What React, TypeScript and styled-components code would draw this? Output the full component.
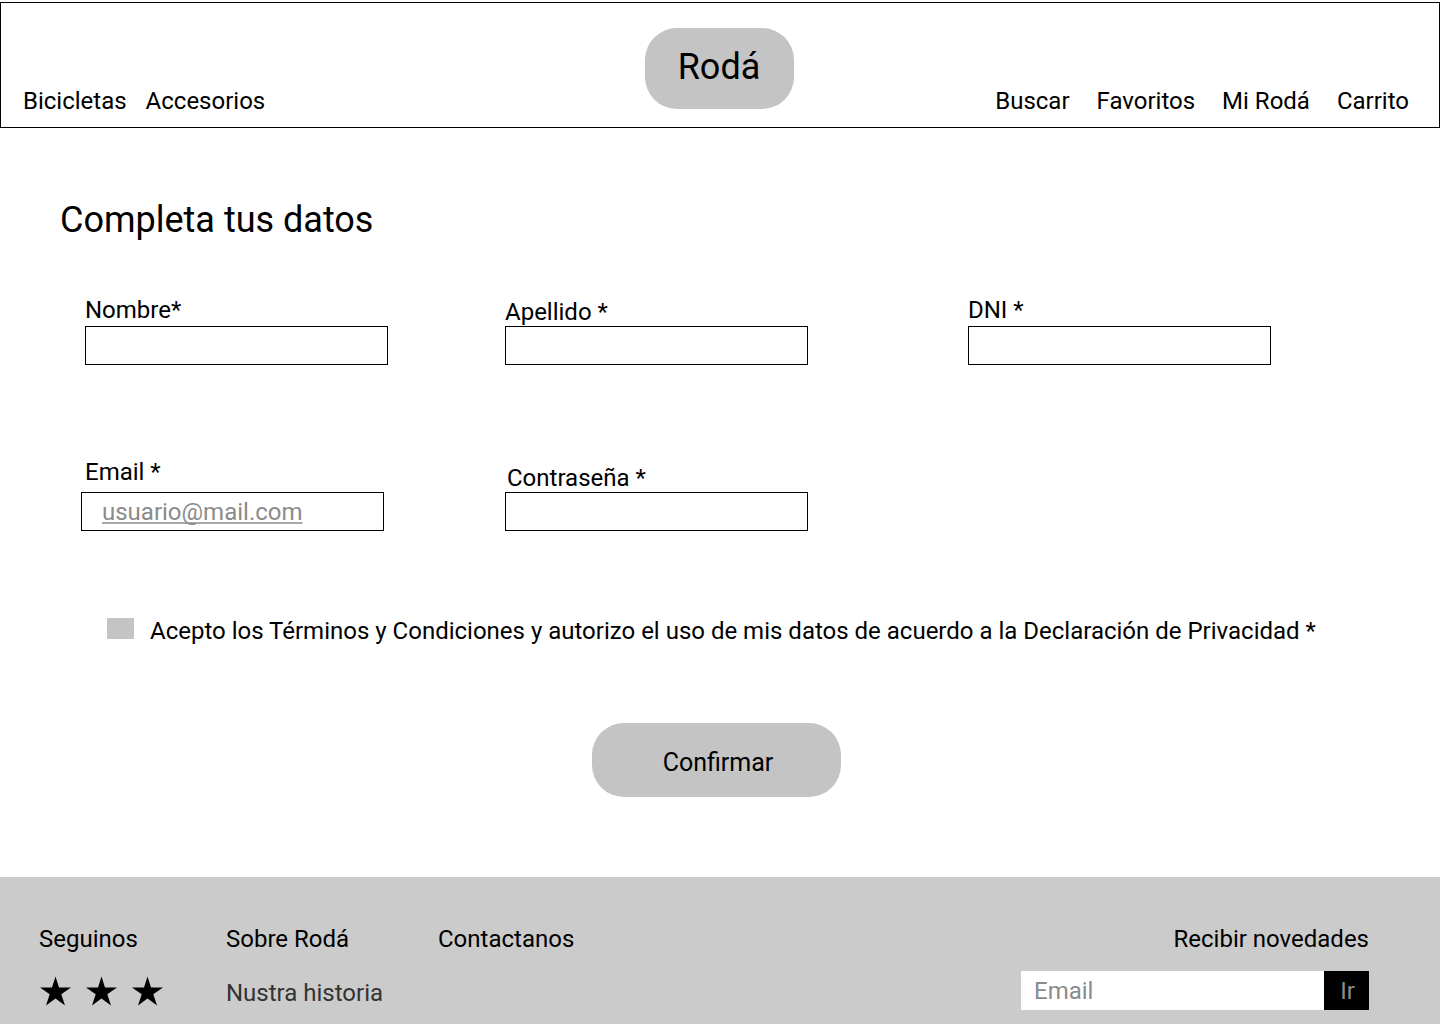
import React from "react";
import styled, { createGlobalStyle } from "styled-components";

const GlobalStyle = createGlobalStyle`
  * { box-sizing: border-box; }
  body { margin: 0; background: #fff; color: #000; font: 24px/28px Roboto, sans-serif; }
  input, button { font: inherit; color: inherit; border-radius: 0; }
  a { color: inherit; text-decoration: none; }
  h1, h2, p { margin: 0; font-weight: 400; }
`;

const Page = styled.div`
  min-height: 100vh;
  display: flex;
  flex-direction: column;
  overflow: hidden;
`;

const Header = styled.header`
  display: grid;
  grid-template-columns: 1fr auto 1fr;
  align-items: end;
  margin-top: 2px;
  padding: 25px 30px 12px 22px;
  border: 1px solid #000;
`;

const Nav = styled.nav<{ $gap: number; $end?: boolean }>`
  display: flex;
  gap: ${(p) => p.$gap}px;
  justify-content: ${(p) => (p.$end ? "flex-end" : "flex-start")};
`;

const Logo = styled.a`
  display: flex;
  align-items: center;
  justify-content: center;
  width: 149px;
  height: 81px;
  margin: 0 0 6px 6px;
  padding-bottom: 4px;
  border-radius: 32px;
  background: #c4c4c4;
  font-size: 36px;
  line-height: 42px;
`;

const Main = styled.main`
  flex: 1;
  padding: 71px 60px 80px;
`;

const Title = styled.h1`
  font-size: 36px;
  line-height: 42px;
`;

const Form = styled.form`
  display: flex;
  flex-direction: column;
`;

const Fields = styled.div`
  display: grid;
  grid-template-columns: 420fr 463fr 412fr;
  row-gap: 93px;
  margin-top: 55px;
  padding-left: 25px;
`;

const Field = styled.div`
  display: flex;
  flex-direction: column;
  justify-content: flex-end;
  align-items: flex-start;
`;

const Label = styled.label<{ $gap: number; $indent?: number }>`
  margin-bottom: ${(p) => p.$gap}px;
  padding-left: ${(p) => p.$indent ?? 0}px;
`;

const TextBox = styled.input<{ $outdent?: number }>`
  width: 303px;
  max-width: 100%;
  height: 39px;
  margin-left: -${(p) => p.$outdent ?? 0}px;
  padding: 0 20px;
  border: 1px solid #000;
  background: #fff;
  &::placeholder {
    color: #8b8b8b;
    opacity: 1;
    text-decoration: underline #a8a8a8;
    text-decoration-skip-ink: none;
  }
`;

const Terms = styled.div`
  display: flex;
  align-items: center;
  gap: 16px;
  margin-top: 86px;
  padding-left: 47px;
`;

const CheckBox = styled.input`
  appearance: none;
  flex: none;
  width: 27px;
  height: 21px;
  margin: 0 0 5px;
  background: #c4c4c4;
  &:checked { background: #000; }
`;

const Submit = styled.button`
  align-self: center;
  width: 249px;
  height: 74px;
  margin: 78px 7px 0 0;
  padding: 6px 0 0 3px;
  border: 0;
  border-radius: 32px;
  background: #c4c4c4;
  font-size: 25px;
`;

const Footer = styled.footer`
  display: flex;
  justify-content: space-between;
  padding: 48px 71px 14px 39px;
  background: #cbcbcb;
`;

const Columns = styled.div`
  display: grid;
  grid-template-columns: 187px 212px auto;
`;

const Column = styled.section`
  display: flex;
  flex-direction: column;
  align-items: flex-start;
`;

const Heading = styled.h2`
  font-size: 24px;
  line-height: 28px;
`;

const FooterLink = styled.a`
  margin-top: 26px;
  color: #333;
`;

const Stars = styled.div`
  display: flex;
  gap: 14px;
  margin-top: 23px;
`;

const StarLink = styled.a`
  display: block;
  width: 32px;
  height: 32px;
  svg { display: block; }
`;

const News = styled.form`
  display: flex;
  flex-direction: column;
  align-items: flex-end;
  gap: 18px;
`;

const Signup = styled.div`
  display: flex;
  height: 39px;
`;

const NewsBox = styled.input`
  width: 303px;
  padding: 0 13px;
  border: 0;
  background: #fff;
  &::placeholder { color: #8b8b8b; opacity: 1; }
`;

const Go = styled.button`
  width: 45px;
  padding: 0 0 0 2px;
  border: 0;
  background: #000;
  color: #8b8b8b;
`;

const Star = () => (
  <svg width="32" height="32" viewBox="0 0 32 32" aria-hidden="true">
    <path d="M16.5 0.5L20 11.4H32L22.3 18.2L26 29.6L16.5 22.6L7 29.6L10.7 18.2L1 11.4H13Z" />
  </svg>
);

const fields = [
  { id: "nombre", label: "Nombre*", gap: 2 },
  { id: "apellido", label: "Apellido *", gap: 0 },
  { id: "dni", label: "DNI *", gap: 2 },
  { id: "email", label: "Email *", type: "email", gap: 6, outdent: 4, placeholder: "usuario@mail.com" },
  { id: "clave", label: "Contraseña *", type: "password", gap: 0, indent: 2 },
];

export default function App() {
  return (
    <Page>
      <GlobalStyle />
      <Header>
        <Nav $gap={19}>
          <a href="#bicicletas">Bicicletas</a>
          <a href="#accesorios">Accesorios</a>
        </Nav>
        <Logo href="#inicio">Rodá</Logo>
        <Nav $gap={27} $end>
          <a href="#buscar">Buscar</a>
          <a href="#favoritos">Favoritos</a>
          <a href="#mi-roda">Mi Rodá</a>
          <a href="#carrito">Carrito</a>
        </Nav>
      </Header>
      <Main>
        <Title>Completa tus datos</Title>
        <Form onSubmit={(e) => e.preventDefault()}>
          <Fields>
            {fields.map((f) => (
              <Field key={f.id}>
                <Label htmlFor={f.id} $gap={f.gap} $indent={f.indent}>{f.label}</Label>
                <TextBox id={f.id} type={f.type ?? "text"} placeholder={f.placeholder} $outdent={f.outdent} />
              </Field>
            ))}
          </Fields>
          <Terms>
            <CheckBox id="terminos" type="checkbox" />
            <label htmlFor="terminos">
              Acepto los Términos y Condiciones y autorizo el uso de mis datos de acuerdo a la Declaración de Privacidad *
            </label>
          </Terms>
          <Submit type="submit">Confirmar</Submit>
        </Form>
      </Main>
      <Footer>
        <Columns>
          <Column>
            <Heading>Seguinos</Heading>
            <Stars>
              {[1, 2, 3].map((n) => (
                <StarLink key={n} href={`#red-${n}`} aria-label={`Red social ${n}`}><Star /></StarLink>
              ))}
            </Stars>
          </Column>
          <Column>
            <Heading>Sobre Rodá</Heading>
            <FooterLink href="#historia">Nustra historia</FooterLink>
          </Column>
          <Column>
            <Heading>Contactanos</Heading>
          </Column>
        </Columns>
        <News onSubmit={(e) => e.preventDefault()}>
          <label htmlFor="novedades">Recibir novedades</label>
          <Signup>
            <NewsBox id="novedades" type="email" placeholder="Email" />
            <Go type="submit">Ir</Go>
          </Signup>
        </News>
      </Footer>
    </Page>
  );
}
